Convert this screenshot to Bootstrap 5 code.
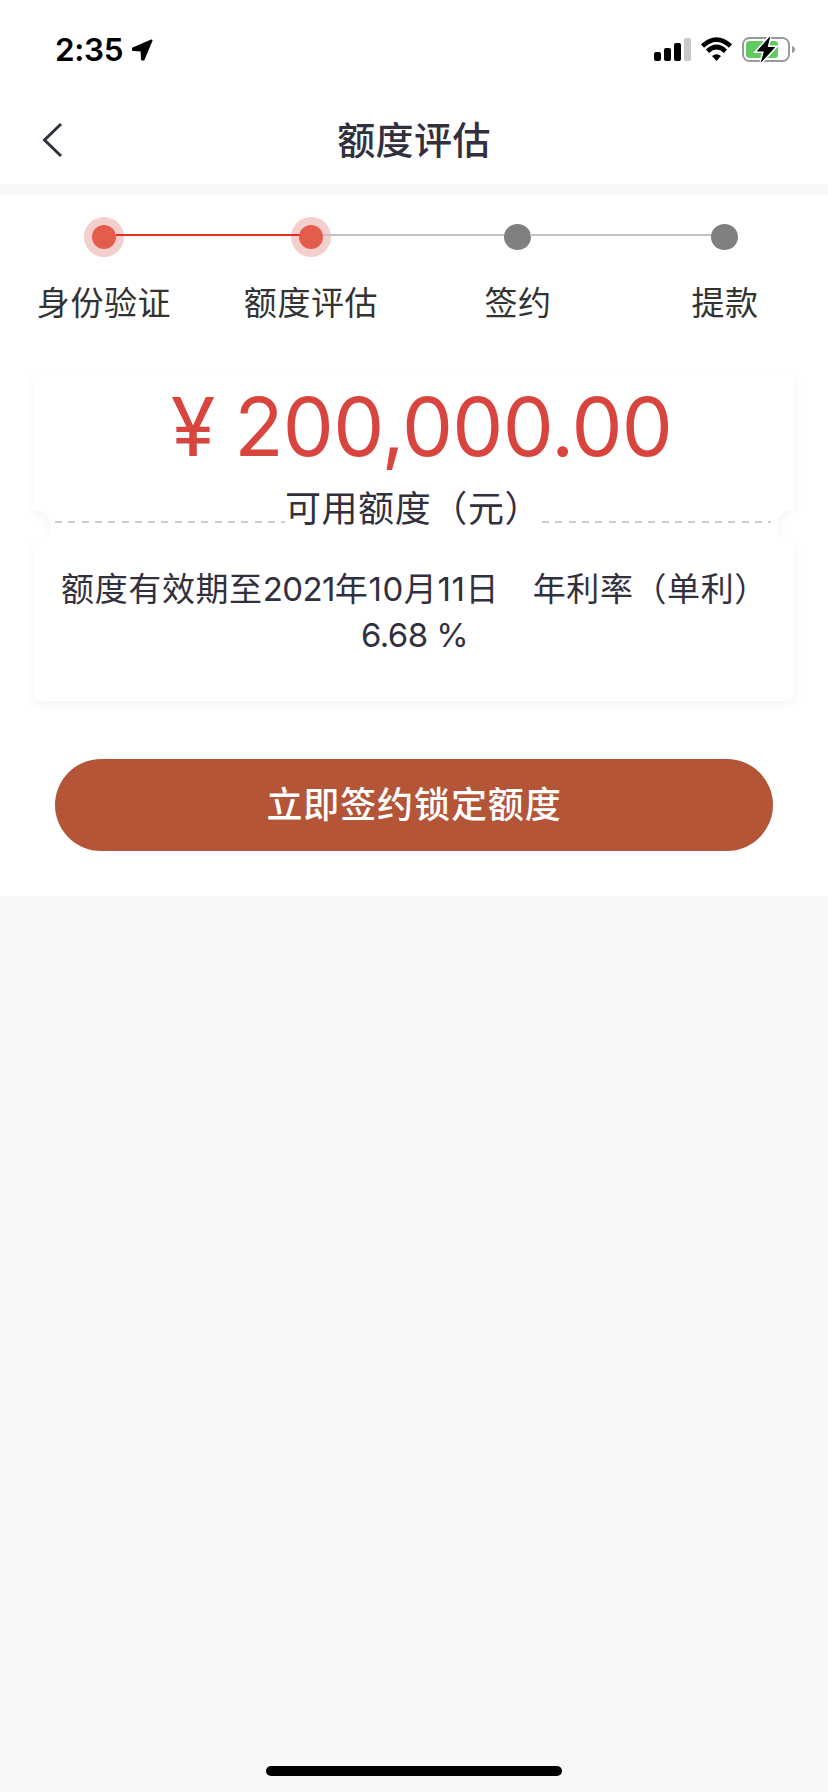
<!DOCTYPE html>
<html lang="zh-CN">
<head>
<meta charset="utf-8">
<meta name="viewport" content="width=device-width, initial-scale=1">
<title>额度评估</title>
<link href="https://cdn.jsdelivr.net/npm/bootstrap@5.3.0/dist/css/bootstrap.min.css" rel="stylesheet">
<style>
  body { font-family: Inter, "Noto Sans CJK SC", sans-serif; background: #f7f7f7; color: #33303e; min-height: 1792px; }
  .status-bar { height: 96px; padding: 5px 32px 0 55px; color: #000; }
  .clock { font-size: 31.5px; font-weight: 600; line-height: 1; letter-spacing: -.3px; position: relative; top: -1px; }
  .title-bar { height: 88px; padding: 0 40px 1px 40px; }
  .title-bar h1 { font-size: 38px; font-weight: 500; letter-spacing: .4px; line-height: 48px; }
  .panel { margin-top: 11px; height: 701px; }
  .steps { height: 177px; padding-top: 22px; }
  .step-item { color: #333; }
  .dot-box { height: 40px; }
  .dot-box::before { content: ""; position: absolute; left: calc(-50% + 12px); right: calc(50% + 12px); top: 17px; height: 2px; background: #c2c2c4; }
  .step-item:first-child .dot-box::before { display: none; }
  .step-item.done .dot-box::before { background: #e32f1f; right: 50%; z-index: 1; }
  .dot { width: 27px; height: 26px; background: #808080; position: relative; }
  .done .dot { width: 40px; height: 40px; background: #f5cfcd; }
  .done .dot::after { content: ""; position: absolute; inset: 8px; border-radius: 50%; background: #e45c4c; z-index: 2; }
  .step-label { font-size: 33px; letter-spacing: .6px; line-height: 48px; margin-top: 22px; padding-left: 1px; }
  .ticket { margin: 0 34px 0 33px; height: 329px; isolation: isolate; }
  .ticket-shape { inset: 0; z-index: -1; filter: drop-shadow(0 3px 4px rgba(0,0,0,.045)); }
  .ticket-shape::before { content: ""; position: absolute; inset: 0; border-radius: 8px; background:
    radial-gradient(circle at 0 155px, transparent 17px, #fff 18px) 0 0 / 51% 100% no-repeat,
    radial-gradient(circle at 100% 155px, transparent 17px, #fff 18px) 100% 0 / 51% 100% no-repeat; }
  .amount { font-size: 81px; line-height: 96px; padding: 7px 0 0 16px; color: #d8453f; white-space: pre; letter-spacing: -.75px; word-spacing: -2.500px; }
  .quota-row { height: 48px; margin: 10px 23px 0 22px; }
  .dash-line { height: 2px; margin-top: 36px; background: repeating-linear-gradient(90deg, #ccc 0 7px, transparent 7px 13.3px); }
  .quota-label { font-size: 36px; letter-spacing: .6px; line-height: 48px; width: 257px; white-space: nowrap; }
  .rate { font-size: 33px; letter-spacing: .6px; line-height: 46px; margin-top: 33px; padding-left: 2px; white-space: nowrap; }
  .figure-tight { letter-spacing: -.6px; }
  .sign-btn { margin: 58px 55px 0; height: 92px; width: 718px; background: #b45537; color: #fff; font-size: 36px; font-weight: 500; letter-spacing: .9px; border: 0; }
  .home-bar { width: 296px; height: 10px; background: #000; margin-bottom: 16px; }
</style>
</head>
<body class="d-flex flex-column">
<header class="bg-white">
  <div class="status-bar d-flex align-items-center justify-content-between">
    <div class="d-flex align-items-center">
      <span class="clock">2:35</span>
      <svg class="ms-2" width="22" height="23" viewBox="0 0 22 23"><path d="M20.5 1.5 12.5 20.500 11 20.500 10.600 11.600 2 11V9.500Z" fill="#000" stroke="#000" stroke-width="2" stroke-linejoin="round"/></svg>
    </div>
    <svg width="142" height="30" viewBox="0 0 142 30">
      <rect x="0" y="16" width="7" height="9" rx="2"/><rect x="10" y="12" width="7" height="13" rx="2"/><rect x="20" y="7" width="7" height="18" rx="2"/><rect x="30" y="2" width="7" height="23" rx="2" fill="#c8c8c8"/>
      <g fill="none" stroke="#000" stroke-width="4.600"><path d="M48.500 10Q62.500-2.800 76.500 10"/><path d="M53.500 15.200Q62.500 6.800 71.500 15.200"/></g>
      <path d="M58 20Q62.500 16.500 67 20L62.500 25Z"/>
      <rect x="89" y="2" width="46" height="23" rx="6.500" fill="none" stroke="#9a9a9a" stroke-width="2"/>
      <path d="M138 10Q141 11 141 13.500T138 17Z" fill="#9a9a9a"/>
      <rect x="92" y="5" width="32" height="17" rx="3.500" fill="#5fca5d"/>
      <path d="M115.500 1.500 103.500 15H110.500L107.500 25.500 120.500 11.500H113Z" stroke="#fff" stroke-width="4"/>
      <path d="M115.500 1.500 103.500 15H110.500L107.500 25.500 120.500 11.500H113Z" stroke="#000" stroke-width="1" stroke-linejoin="round"/>
    </svg>
  </div>
  <nav class="title-bar d-flex align-items-center justify-content-between">
    <svg width="24" height="36" viewBox="0 0 24 36"><path d="M21 2 4.500 18 21 34" fill="none" stroke="#33303e" stroke-width="3"/></svg>
    <h1 class="m-0">额度评估</h1>
    <span style="width:24px"></span>
  </nav>
</header>
<main class="panel bg-white">
  <div class="steps row g-0 text-center">
    <div class="step-item done col-3"><div class="dot-box position-relative d-flex justify-content-center align-items-center"><i class="dot rounded-circle"></i></div><div class="step-label">身份验证</div></div>
    <div class="step-item done col-3"><div class="dot-box position-relative d-flex justify-content-center align-items-center"><i class="dot rounded-circle"></i></div><div class="step-label">额度评估</div></div>
    <div class="step-item col-3"><div class="dot-box position-relative d-flex justify-content-center align-items-center"><i class="dot rounded-circle"></i></div><div class="step-label">签约</div></div>
    <div class="step-item col-3"><div class="dot-box position-relative d-flex justify-content-center align-items-center"><i class="dot rounded-circle"></i></div><div class="step-label">提款</div></div>
  </div>
  <section class="ticket position-relative text-center">
    <div class="ticket-shape position-absolute"></div>
    <div class="amount">¥ 200,000.00</div>
    <div class="quota-row d-flex">
      <div class="dash-line flex-fill"></div><div class="quota-label">可用额度（元）</div><div class="dash-line flex-fill"></div>
    </div>
    <div class="rate">额度有效期至<span class="figure-tight">2021</span>年10月11日　年利率（单利）<br><span class="figure-tight">6.68 %</span></div>
  </section>
  <button class="sign-btn btn rounded-pill d-block" type="button">立即签约锁定额度</button>
</main>
<footer class="mt-auto d-flex justify-content-center"><div class="home-bar rounded-pill"></div></footer>
<script src="https://cdn.jsdelivr.net/npm/bootstrap@5.3.0/dist/js/bootstrap.bundle.min.js"></script>
</body>
</html>
